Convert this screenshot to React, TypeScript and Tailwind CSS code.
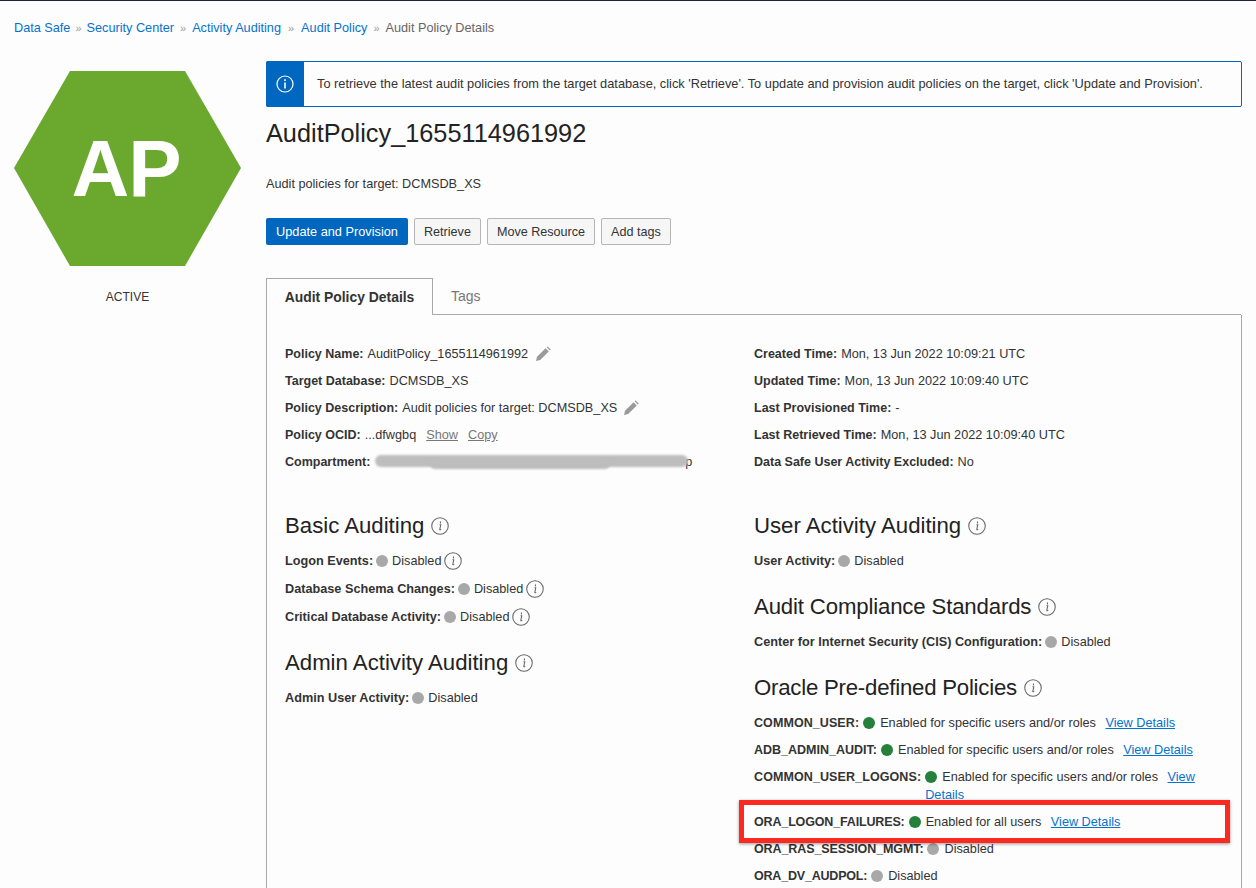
import React from "react";

const Info = ({ size = 17 }: { size?: number }) => (
  <svg width={size} height={size} viewBox="0 0 17 17" fill="none" className="inline-block shrink-0">
    <circle cx="8.5" cy="8.5" r="7.8" stroke="#666" strokeWidth="1" />
    <path d="M8.9 4.6v1M8.4 7.4h.8l-.9 4.2c-.1.5.3.7 1 .3" stroke="#666" strokeWidth="1" strokeLinecap="round" />
  </svg>
);

const Pencil = () => (
  <svg width="16" height="16" viewBox="0 0 16 16" className="inline-block shrink-0">
    <path d="M1 15l1-4.2L10.6 2.2l3.2 3.2L5.2 14z" fill="#9a9a9a" />
    <path d="M11.6 1.2l1-.8 3.2 3.2-1 1z" fill="#9a9a9a" />
  </svg>
);

const Dot = ({ on }: { on?: boolean }) => (
  <span className={`inline-block w-3 h-3 rounded-full align-[-2px] mr-[5px] ${on ? "bg-[#24803a]" : "bg-[#a8a8a8]"}`} />
);

const Row = ({ label, labelClass = "", children }: { label: string; labelClass?: string; children: React.ReactNode }) => (
  <div className="flex items-start mb-[9px] leading-[18px]">
    <b className={`font-bold shrink-0 mr-1 text-[12.5px] ${labelClass}`}>{label}</b>
    <div>{children}</div>
  </div>
);

const Heading = ({ children, className = "" }: { children: string; className?: string }) => (
  <h3 className={`flex items-center gap-[7px] text-[22.2px] leading-[30px] text-[#222] mb-[11px] ${className}`}>
    {children}
    <Info size={18} />
  </h3>
);

const Link = ({ children }: { children: string }) => (
  <a className="text-[#0572ce] underline ml-[6px]">{children}</a>
);

const Status = ({ label, info }: { label: string; info?: boolean }) => (
  <div className="flex items-center mb-[10px] leading-[18px]">
    <b className="font-bold mr-[3px] text-[12.7px]">{label}</b>
    <span className="w-3 h-3 rounded-full bg-[#a8a8a8] mr-[4px]" />
    <span>Disabled</span>
    {info && <span className="ml-[3px] flex"><Info size={18} /></span>}
  </div>
);

const Crumb = ({ children, sep }: { children: string; sep: string }) => (
  <>
    <a className="text-[#0572ce]">{children}</a>
    <span className={`text-[#999] text-[11px] ${sep}`}>»</span>
  </>
);

const Btn = ({ children }: { children: string }) => (
  <button className="h-[27px] px-[9px] pt-px border border-[#b5b5b5] bg-[#f6f6f6] rounded-[2px] text-[#333] text-[12.6px]">{children}</button>
);

export default function App() {
  return (
    <div className="relative w-[1256px] h-[888px] overflow-hidden bg-[#fdfdfd] text-[#333] text-[12.7px] font-['Liberation_Sans',Arial,sans-serif] border-t border-[#1c2733]">
      <div className="pl-[14px] pt-[18px] h-[60px] leading-[18px] text-[#666] text-[12.7px]">
        <Crumb sep="mx-[5px]">Data Safe</Crumb>
        <Crumb sep="mx-[6px]">Security Center</Crumb>
        <Crumb sep="mx-[7px]">Activity Auditing</Crumb>
        <Crumb sep="mx-[6px]">Audit Policy</Crumb>
        <span>Audit Policy Details</span>
      </div>
      <div className="flex pl-[14px] pr-[14px]">
        <aside className="w-[252px] shrink-0 pt-[10px]">
          <div className="relative w-[227px] h-[195px]">
            <svg width="227" height="195" viewBox="0 0 227 195">
              <polygon points="56,0 171,0 227,97 171,195 56,195 0,97" fill="#6aa82e" />
            </svg>
            <div className="absolute inset-0 flex items-center justify-center pr-[3px] text-white font-bold text-[80px] leading-none tracking-[-1px]">AP</div>
          </div>
          <div className="w-[227px] text-center text-[12px] mt-[23px] leading-[16px]">ACTIVE</div>
        </aside>
        <main className="flex-1 min-w-0">
          <div className="flex h-[46px] border border-[#0067c0] rounded-[2px] items-stretch">
            <div className="w-[38px] bg-[#0067c0] flex items-center justify-center -ml-px -my-px rounded-l-[2px]">
              <svg width="18" height="18" viewBox="0 0 18 18" fill="none">
                <circle cx="9" cy="9" r="8" stroke="#fff" strokeWidth="1.2" />
                <path d="M9 4.2v1.8M9 7.5v6" stroke="#fff" strokeWidth="1.6" />
              </svg>
            </div>
            <div className="pl-[13px] flex items-center text-[12.8px] text-[#333]">
              To retrieve the latest audit policies from the target database, click 'Retrieve'. To update and provision audit policies on the target, click 'Update and Provision'.
            </div>
          </div>
          <h1 className="text-[25.3px] leading-[30px] text-[#222] mt-[11px]">AuditPolicy_1655114961992</h1>
          <p className="mt-[27px] leading-[18px]">Audit policies for target: DCMSDB_XS</p>
          <div className="flex gap-[6px] mt-[25px]">
            <button className="h-[27px] w-[142px] bg-[#0067c0] rounded-[2px] text-white text-[12.75px]">Update and Provision</button>
            <Btn>Retrieve</Btn>
            <Btn>Move Resource</Btn>
            <Btn>Add tags</Btn>
          </div>
          <div className="flex mt-[33px] h-[37px] border-b border-[#a9a9a9] mr-px">
            <div className="w-[167px] h-[37px] border border-[#a9a9a9] border-b-0 bg-[#fdfdfd] flex items-center justify-center font-bold text-[13.9px] text-[#333]">Audit Policy Details</div>
            <div className="pl-[18px] flex items-center text-[14px] text-[#777]">Tags</div>
          </div>
          <div className="flex border-x border-[#a9a9a9] pl-[18px] pt-[30px] h-[600px]">
            <div className="w-[469px] shrink-0">
              <Row label="Policy Name:"><span className="inline-flex items-center">AuditPolicy_1655114961992<span className="ml-[7px] flex"><Pencil /></span></span></Row>
              <Row label="Target Database:">DCMSDB_XS</Row>
              <Row label="Policy Description:"><span className="inline-flex items-center">Audit policies for target: DCMSDB_XS<span className="ml-[6px] flex"><Pencil /></span></span></Row>
              <Row label="Policy OCID:"><span>...dfwgbq</span><a className="text-[#777] underline ml-[10px]">Show</a><a className="text-[#777] underline ml-[10px]">Copy</a></Row>
              <Row label="Compartment:"><span className="inline-block w-[318px] text-right">p</span></Row>
              <div className="h-[31px]" />
              <Heading>Basic Auditing</Heading>
              <Status label="Logon Events:" info />
              <Status label="Database Schema Changes:" info />
              <Status label="Critical Database Activity:" info />
              <div className="h-[12px]" />
              <Heading>Admin Activity Auditing</Heading>
              <Status label="Admin User Activity:" />
            </div>
            <div className="w-[468px] shrink-0">
              <Row label="Created Time:">Mon, 13 Jun 2022 10:09:21 UTC</Row>
              <Row label="Updated Time:">Mon, 13 Jun 2022 10:09:40 UTC</Row>
              <Row label="Last Provisioned Time:">-</Row>
              <Row label="Last Retrieved Time:">Mon, 13 Jun 2022 10:09:40 UTC</Row>
              <Row label="Data Safe User Activity Excluded:">No</Row>
              <div className="h-[31px]" />
              <Heading>User Activity Auditing</Heading>
              <Status label="User Activity:" />
              <div className="h-[12px]" />
              <Heading className="tracking-[-0.15px]">Audit Compliance Standards</Heading>
              <Status label="Center for Internet Security (CIS) Configuration:" />
              <div className="h-[12px]" />
              <Heading className="tracking-[-0.22px]">Oracle Pre-defined Policies</Heading>
              <Row label="COMMON_USER:" labelClass="tracking-[0.08px]"><Dot on />Enabled for specific users and/or roles <Link>View Details</Link></Row>
              <Row label="ADB_ADMIN_AUDIT:"><Dot on />Enabled for specific users and/or roles <Link>View Details</Link></Row>
              <Row label="COMMON_USER_LOGONS:" labelClass="tracking-[0.1px]"><Dot on />Enabled for specific users and/or roles <Link>View Details</Link></Row>
              <Row label="ORA_LOGON_FAILURES:" labelClass="tracking-[-0.15px]"><Dot on />Enabled for all users <Link>View Details</Link></Row>
              <Row label="ORA_RAS_SESSION_MGMT:" labelClass="tracking-[-0.1px]"><Dot />Disabled</Row>
              <Row label="ORA_DV_AUDPOL:" labelClass="tracking-[-0.2px]"><Dot />Disabled</Row>
            </div>
          </div>
        </main>
      </div>
      <div className="absolute left-[375px] top-[454px] w-[313px] h-[12px] rounded-full bg-[#bdbdbd] blur-[1px]" />
      <div className="absolute left-[430px] top-[458px] w-[180px] h-[10px] rounded-full bg-[#bdbdbd] blur-[1px]" />
      <div className="absolute left-[739px] top-[799px] w-[491px] h-[43px] border-[5px] border-[#fb2a20] shadow-[0_1px_3px_rgba(0,0,0,0.4)]" />
    </div>
  );
}
